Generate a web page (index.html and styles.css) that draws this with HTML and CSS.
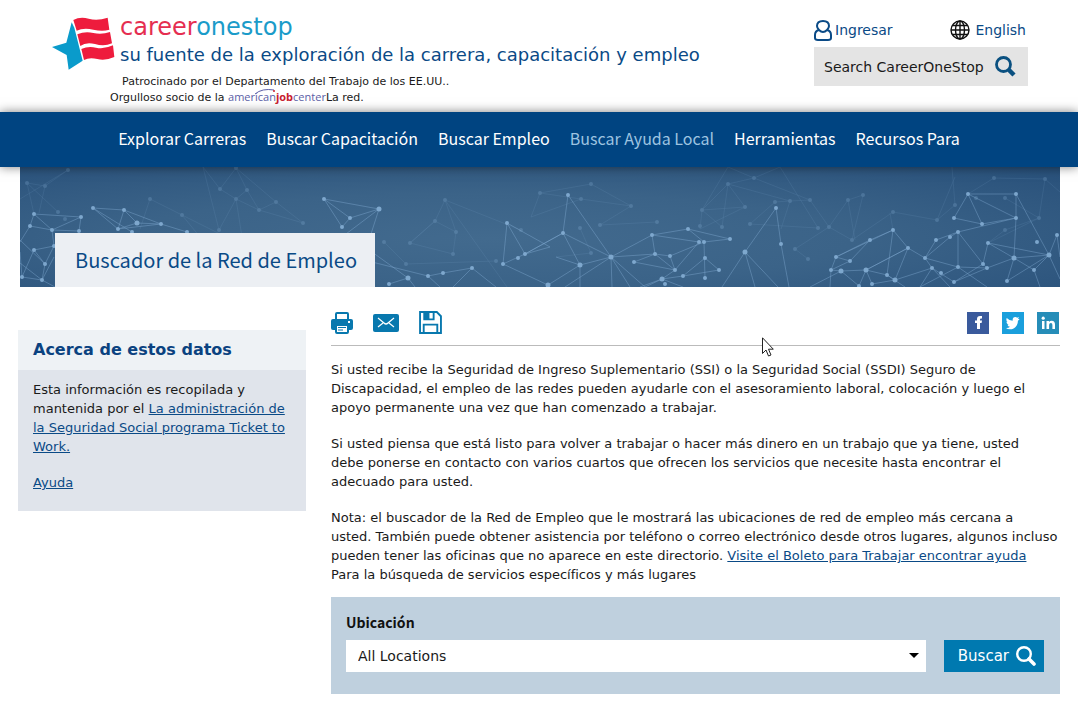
FILE: index.html
```
<!DOCTYPE html>
<html lang="es">
<head>
    <meta charset="UTF-8">
    <meta name="viewport" content="width=device-width, initial-scale=1.0">
    <title>Buscador de la Red de Empleo</title>
    <link rel="stylesheet" href="styles.css">
</head>
<body>
    <header class="header">
        <div class="brand">
            <div class="brand-top">
                <svg class="logo" viewBox="36 52 189 159" aria-hidden="true">
                    <path fill="#0a9bcb" d="M36 142 L79 129 L95 68 L103 84 L128 183 L86 210 L80 166 Z"/>
                    <g fill="#ee1c3d">
                        <path d="M100 61 Q120 50 146 57 T203 54 L208 90 Q188 96 160 90 Q130 84 110 93 Z"/>
                        <path d="M112 104 Q135 94 160 100 T210 97 L216 131 Q192 142 165 133 Q138 126 121 139 Z"/>
                        <path d="M124 148 Q145 138 168 144 T219 137 L223 172 Q196 184 172 178 T132 181 Z"/>
                    </g>
                </svg>
                <div>
                    <a href="#" class="brand-name"><span>career</span>onestop</a>
                    <p class="tagline">su fuente de la exploración de la carrera, capacitación y empleo</p>
                </div>
            </div>
            <p class="sponsor first">Patrocinado por el Departamento del Trabajo de los EE.UU..</p>
            <p class="sponsor">Orgulloso socio de la <span class="ajc">american<b>job</b>center<svg class="arc" viewBox="0 0 22 7" aria-hidden="true"><path d="M1 6 Q8 0 20 2" fill="none" stroke="#5b5ea6"/><circle cx="20" cy="3" r="1" fill="#c8202f"/></svg></span>La red.</p>
        </div>
        <div class="tools">
            <div class="tool-links">
                <a href="#">
                    <svg width="18" height="21" viewBox="0 0 18 21" fill="none" stroke="#0a4a86" stroke-width="2" aria-hidden="true">
                        <path d="M5 10 Q3 8 3 6 Q3 1 9 1 Q15 1 15 6 Q15 8 13 10 Q17 11 17 15 V18 Q17 20 14 20 H4 Q1 20 1 18 V15 Q1 11 5 10 Q9 14 13 10"/>
                    </svg>
                    Ingresar
                </a>
                <a href="#" class="lang">
                    <svg width="20" height="20" viewBox="0 0 20 20" fill="none" stroke="#111" stroke-width="1.4" aria-hidden="true">
                        <circle cx="10" cy="10" r="9"/>
                        <ellipse cx="10" cy="10" rx="4.5" ry="9"/>
                        <path d="M10 1 V19 M1 10 H19 M2.5 5.5 H17.5 M2.5 14.5 H17.5"/>
                    </svg>
                    English
                </a>
            </div>
            <form class="site-search">
                <input type="text" aria-label="Search CareerOneStop" placeholder="Search CareerOneStop">
                <button type="submit" aria-label="Search">
                    <svg width="21" height="21" viewBox="0 0 21 21" fill="none" stroke="#0a5080" aria-hidden="true">
                        <circle cx="8.5" cy="8.5" r="7" stroke-width="2.8"/>
                        <path d="M14 14 L19 19" stroke-width="4.5"/>
                    </svg>
                </button>
            </form>
        </div>
    </header>

    <nav class="nav">
        <a href="#">Explorar Carreras</a>
        <a href="#">Buscar Capacitación</a>
        <a href="#">Buscar Empleo</a>
        <a href="#" class="active">Buscar Ayuda Local</a>
        <a href="#">Herramientas</a>
        <a href="#">Recursos Para</a>
    </nav>

    <div class="banner">
        <svg class="network" viewBox="0 0 1040 120" preserveAspectRatio="xMidYMid slice" aria-hidden="true">
            <!-- far layer -->
            <g class="far">
                <path d="M48 3 L25 19 L7 16 L14 47 M25 19 L19 46 M7 16 L38 45 M48 3 L0 32 M216 1 L200 22 L183 0 L199 63 L216 32 L227 23 L216 1 L256 35 L239 43 L216 32 L200 22 M239 43 L283 56 L256 35 M227 23 L239 43 M130 32 L162 48 L206 70 M130 32 L120 62 M162 48 L180 70 M216 32 L222 70 M425 33 L415 54 L436 65 L425 33 L501 63 M415 54 L390 76 L433 87 L436 65 M425 33 L487 120 M386 97 L364 75 M386 97 L476 94 M390 76 L415 54"/>
                <path d="M520 26 L571 17 L611 39 L561 32 L520 26 L511 50 L561 32 M580 58 L637 55 M580 58 L611 39 M708 17 L734 11 L708 0 L682 43 L708 17 L725 40 L682 43 M708 17 L770 34 L790 33 L734 11 L760 0 L798 61 L730 57 L755 35 L770 34 L761 62 M790 33 L809 60 L828 33 L843 28 L832 73 L809 60 L775 82 M828 33 L835 73 M702 60 L682 43 L680 62 L725 40 M708 17 L702 60 M775 82 L788 92 M917 53 L935 38 L932 0 M917 53 L935 10 M974 11 L1025 12 L1040 25 M974 11 L948 27 M985 31 L1019 51 L1025 12 M1019 51 L968 76 L985 63 M873 45 L832 73 M873 45 L917 53 M560 61 L571 86 L536 90 M985 63 L1019 51 M870 46 L873 63"/>
                <path class="dots" d="M7 16h0 M25 19h0 M48 3h0 M38 45h0 M45 52h0 M130 32h0 M162 48h0 M200 22h0 M227 23h0 M216 1h0 M216 32h0 M239 43h0 M256 35h0 M283 56h0 M199 63h0 M425 33h0 M415 54h0 M436 65h0 M390 76h0 M433 87h0 M386 97h0 M364 75h0 M476 94h0 M501 63h0 M520 26h0 M571 17h0 M561 32h0 M611 39h0 M580 58h0 M637 55h0 M560 61h0 M571 86h0 M682 43h0 M708 17h0 M734 11h0 M725 40h0 M755 35h0 M770 34h0 M790 33h0 M798 61h0 M809 60h0 M828 33h0 M843 28h0 M730 57h0 M702 60h0 M680 59h0 M775 82h0 M788 92h0 M832 73h0 M873 45h0 M917 53h0 M935 38h0 M974 11h0 M1025 12h0 M985 31h0 M1019 51h0 M985 63h0 M956 31h0"/>
            </g>
            <!-- near layer -->
            <g class="near">
                <path d="M14 47 L10 59 L32 63 L61 50 L14 47 L32 63 L59 64 L61 50 M73 41 L104 43 L98 62 L73 41 L112 65 M104 43 L117 56 L98 62 L141 57 L167 65 M117 56 L141 57 M104 43 L141 57 M32 63 L34 79 L14 83 L25 97 L22 113 L2 110 L14 83 M0 73 L25 97 L34 79 M2 110 L0 85 M22 113 L35 120 M10 59 L0 75 M0 96 L22 113 L34 90 M304 32 L359 42 L330 51 L304 32 L322 60 L330 51 M359 42 L322 70 M359 42 L350 70 M352 85 L388 111 L369 117 M352 95 L408 109 L423 106 L452 101 L476 120 M408 109 L420 120 M388 111 L395 120 M452 101 L433 120 M487 56 L505 87 L483 97 L487 56 L530 80 L505 87 L543 66 M483 97 L528 118"/>
                <path d="M548 28 L543 66 L560 98 L591 90 L548 28 M543 66 L591 90 L545 120 M543 66 L505 87 M560 98 L528 118 M536 90 L560 98 L560 120 M591 90 L632 68 L668 62 L710 72 L684 75 L668 62 M632 68 L635 87 L650 89 L684 75 L685 111 M632 68 L679 75 L655 103 L642 112 L663 109 L699 103 L685 91 L663 109 M614 95 L635 87 L591 90 L625 120 L642 112 L663 120 M614 95 L655 103 L650 89 M591 90 L592 120 M591 90 L610 120 M635 87 L655 103 M725 85 L756 41 L761 77 L769 120 M725 85 L702 120 M725 85 L735 120 M725 85 L758 120 M642 112 L620 120"/>
                <path d="M816 90 L850 73 L873 63 L888 81 L905 91 L930 70 L938 65 L963 97 L967 101 L938 100 L905 91 L912 101 L875 113 L888 81 L846 103 L821 104 L811 103 L816 90 L830 94 L850 73 M830 94 L811 103 L810 120 M821 104 L839 119 L846 103 L852 117 L875 113 L867 108 L846 103 L888 81 M867 108 L873 63 L816 90 M905 91 L916 73 L938 65 M912 101 L934 115 L967 101 L994 91 L987 114 M912 101 L900 120 L938 100 L938 65 M948 27 L996 27 L996 51 L948 27 L934 51 L962 57 L948 27 M962 57 L996 51 L938 65 M996 51 L994 91 L968 76 L1029 88 L996 27 M968 76 L963 97 L934 115 M994 91 L1014 103 L1029 88 L1037 68 L1040 90 M1029 88 L987 114 M1014 103 L1020 120 M1029 88 L1040 112 M994 91 L1029 88 M867 108 L885 120 M821 104 L790 120 M938 100 L967 120 M912 101 L930 120"/>
                <path class="dots" d="M14 47h0 M10 59h0 M32 63h0 M61 50h0 M59 64h0 M73 41h0 M104 43h0 M98 62h0 M112 65h0 M141 57h0 M167 65h0 M34 79h0 M14 83h0 M25 97h0 M22 113h0 M2 110h0 M304 32h0 M322 60h0 M330 51h0 M369 117h0 M408 109h0 M423 106h0 M452 101h0 M487 56h0 M505 87h0 M498 91h0 M483 97h0 M548 28h0 M543 66h0 M632 68h0 M668 62h0 M679 75h0 M684 75h0 M710 72h0 M635 87h0 M650 89h0 M614 95h0 M685 91h0 M699 103h0 M685 111h0 M663 109h0 M655 103h0 M645 117h0 M756 41h0 M761 77h0 M816 90h0 M830 94h0 M850 73h0 M873 63h0 M888 81h0 M905 91h0 M811 103h0 M867 108h0 M852 117h0 M839 119h0 M912 101h0 M916 73h0 M930 70h0 M938 65h0 M934 51h0 M948 27h0 M996 27h0 M996 51h0 M962 57h0 M968 76h0 M938 100h0 M963 97h0 M967 101h0 M1037 68h0 M1014 103h0 M987 114h0 M934 115h0 M1017 75h0 M921 106h0"/>
                <path class="dots big" d="M117 56h0 M359 42h0 M388 111h0 M560 98h0 M591 90h0 M528 118h0 M642 112h0 M725 85h0 M821 104h0 M846 103h0 M875 113h0 M994 91h0 M1029 88h0"/>
            </g>
        </svg>
        <h1>Buscador de la Red de Empleo</h1>
    </div>

    <div class="container">
        <aside class="sidebar">
            <h2>Acerca de estos datos</h2>
            <div class="sidebar-body">
                <p>Esta información es recopilada y mantenida por el <a href="#">La administración de la Seguridad Social programa Ticket to Work.</a></p>
                <p><a href="#">Ayuda</a></p>
            </div>
        </aside>

        <main class="main">
            <div class="toolbar">
                <button type="button" aria-label="Imprimir">
                    <svg width="22" height="22" viewBox="0 0 22 22" aria-hidden="true">
                        <path d="M5 8 V2 Q5 1 6 1 H16 Q17 1 17 2 V8" fill="#fff" stroke="#0878ae" stroke-width="2"/>
                        <rect y="7" width="22" height="11" rx="2" fill="#0878ae"/>
                        <rect x="5" y="13" width="12" height="8" rx="1" fill="#fff" stroke="#0878ae" stroke-width="2"/>
                        <path d="M7 15.5 H15 M7 18 H12" stroke="#0878ae" stroke-width="1.2"/>
                        <rect x="17" y="9" width="2" height="2" fill="#fff"/>
                    </svg>
                </button>
                <button type="button" aria-label="Correo electrónico">
                    <svg width="26" height="18" viewBox="0 0 26 18" fill="none" stroke="#fff" aria-hidden="true">
                        <rect width="26" height="18" rx="2" fill="#0878ae" stroke="none"/>
                        <path d="M5 4 L11 9 Q13 11 15 9 L21 4 M5 13 L10 9 M21 13 L16 9" stroke-width="1.2"/>
                    </svg>
                </button>
                <button type="button" aria-label="Guardar">
                    <svg width="23" height="23" viewBox="0 0 22 22" fill="none" stroke="#0878ae" stroke-width="1.8" aria-hidden="true">
                        <path d="M1 1 H17 L21 5 V21 H1 Z"/>
                        <path d="M5 1 V8 H14 V1 M4.5 21 V13 H17.5 V21"/>
                        <rect x="5" y="1" width="5" height="7" fill="#0878ae" stroke="none"/>
                    </svg>
                </button>
                <div class="social">
                    <a href="#" class="facebook" aria-label="Facebook">
                        <svg viewBox="0 0 22 22" fill="#fff" aria-hidden="true"><path d="M10 17 V11 H8 V8.5 H10 V7 Q10 4 13 4 H15 V6.5 H14 Q13 6.5 13 7.5 V8.5 H15 L14.6 11 H13 V17 Z"/></svg>
                    </a>
                    <a href="#" class="twitter" aria-label="Twitter">
                        <svg viewBox="0 0 22 22" fill="#fff" aria-hidden="true"><path d="M17.5 7 Q17 8 15.9 8.8 C16 14 12 17.5 8 17.3 Q5.5 17.2 4 16 Q6.5 16.2 8 14.8 Q6 14.6 5.4 12.8 H6.6 Q4.5 12 4.4 9.8 L5.5 10.1 Q3.6 8.3 4.8 6 Q7.2 8.7 10.7 8.8 Q10.3 5.2 13.3 5 Q14.4 5 15.2 5.7 L17 5.1 Q16.8 6 15.9 6.7 Z"/></svg>
                    </a>
                    <a href="#" class="linkedin" aria-label="LinkedIn">
                        <svg viewBox="0 0 22 22" fill="#fff" aria-hidden="true"><path d="M5 9 H7.5 V17 H5 Z M9.5 9 H12 V10 Q12.8 8.7 14.7 8.7 Q18 8.7 18 12.5 V17 H15.4 V13 Q15.4 11 13.9 11 Q12.100 11 12.100 13 V17 H9.5 Z"/><circle cx="6.2" cy="6.2" r="1.6"/></svg>
                    </a>
                </div>
                <svg class="pointer" viewBox="0 0 12 20" aria-hidden="true"><path d="M.5 .8 V16.5 L4 13 L6.5 19 L9 18 L6.5 12.2 H11.3 Z" fill="#fff" stroke="#222"/></svg>
            </div>

            <p>Si usted recibe la Seguridad de Ingreso Suplementario (SSI) o la Seguridad Social (SSDI) Seguro de Discapacidad, el empleo de las redes pueden ayudarle con el asesoramiento laboral, colocación y luego el apoyo permanente una vez que han comenzado a trabajar.</p>
            <p>Si usted piensa que está listo para volver a trabajar o hacer más dinero en un trabajo que ya tiene, usted<br> debe ponerse en contacto con varios cuartos que ofrecen los servicios que necesite hasta encontrar el<br> adecuado para usted.</p>
            <p>Nota: el buscador de la Red de Empleo que le mostrará las ubicaciones de red de empleo más cercana a<br> usted. También puede obtener asistencia por teléfono o correo electrónico desde otros lugares, algunos incluso pueden tener las oficinas que no aparece en este directorio. <a href="#">Visite el Boleto para Trabajar encontrar ayuda</a><br> Para la búsqueda de servicios específicos y más lugares</p>

            <form class="finder">
                <label for="location">Ubicación</label>
                <div class="finder-row">
                    <div class="select-wrap">
                        <select id="location" name="location">
                            <option>All Locations</option>
                        </select>
                    </div>
                    <button type="submit">
                        Buscar
                        <svg width="20" height="20" viewBox="0 0 20 20" fill="none" stroke="#fff" aria-hidden="true">
                            <circle cx="8" cy="8" r="6.8" stroke-width="2.4"/>
                            <path d="M13 13 L18 18" stroke-width="3.6" stroke-linecap="round"/>
                        </svg>
                    </button>
                </div>
            </form>
        </main>
    </div>
</body>
</html>
```
FILE: styles.css
```
* {
    box-sizing: border-box;
}
body {
    margin: 0;
    font-family: Verdana, "DejaVu Sans", sans-serif;
    font-size: 13px;
    line-height: 19px;
    color: #1a1a1a;
    background: #fff;
}
h1, h2, p {
    margin: 0;
}
a {
    color: #0a4a86;
}
svg {
    display: block;
}
button {
    border: none;
    cursor: pointer;
    font-family: inherit;
}

/* header */
.header {
    display: flex;
    justify-content: space-between;
    padding: 14px 50px 0 52px;
    height: 112px;
}
.brand-top {
    display: flex;
    gap: 5px;
}
.logo {
    width: 63px;
    height: 53px;
    margin-top: 3px;
}
.brand-name {
    display: block;
    font-size: 24px;
    line-height: 26px;
    color: #1a9bc9;
    text-decoration: none;
}
.brand-name span {
    color: #e52e50;
}
.tagline {
    font-size: 18px;
    line-height: 30px;
    color: #0a4a86;
}
.sponsor {
    font-size: 11px;
    line-height: 15px;
    padding-left: 58px;
}
.sponsor.first {
    padding: 4px 0 0 70px;
}
.ajc {
    position: relative;
    font-family: "Open Sans", sans-serif;
    color: #5b5ea6;
}
.ajc b {
    color: #c8202f;
}
.arc {
    position: absolute;
    left: 26px;
    top: -1px;
    width: 22px;
    height: 7px;
}
.tools {
    width: 214px;
    padding-top: 5px;
}
.tool-links {
    display: flex;
    justify-content: space-between;
    height: 28px;
    padding-right: 2px;
}
.tool-links a {
    display: flex;
    align-items: center;
    gap: 3px;
    height: 22px;
    font-size: 14px;
    text-decoration: none;
}
.tool-links .lang {
    gap: 5px;
}
.site-search {
    display: flex;
    align-items: center;
    height: 39px;
    padding: 0 12px 0 10px;
    background: #e4e4e4;
}
.site-search input {
    flex: 1;
    min-width: 0;
    padding: 0;
    border: none;
    background: none;
    font: 14px Verdana, "DejaVu Sans", sans-serif;
}
.site-search input::placeholder {
    color: #1a1a1a;
}
.site-search button {
    padding: 0;
    background: none;
}

/* navigation */
.nav {
    position: relative;
    z-index: 1;
    display: flex;
    justify-content: center;
    align-items: center;
    gap: 20px;
    height: 55px;
    padding-bottom: 2px;
    background: #004481;
    box-shadow: 0 0 10px rgba(0, 0, 0, 0.5);
}
.nav a {
    font-family: "Source Sans Pro", "Noto Sans CJK SC", sans-serif;
    font-size: 16px;
    color: #fff;
    text-decoration: none;
}
.nav a.active {
    color: #9dc3e0;
}

/* banner */
.banner {
    position: relative;
    display: flex;
    align-items: flex-end;
    height: 120px;
    margin: 0 18px 0 20px;
    padding-left: 35px;
    background: radial-gradient(ellipse at 45% 60%, #426a8e 0%, #3b6388 45%, #28507a 100%);
}
.network {
    position: absolute;
    left: 0;
    top: 0;
    width: 100%;
    height: 100%;
    fill: none;
    stroke: #8fb9df;
}
.network .far {
    opacity: 0.25;
}
.network .near {
    opacity: 0.8;
}
.network path {
    stroke-width: 1px;
    stroke-opacity: 0.45;
}
.network .dots {
    stroke-width: 4px;
    stroke-linecap: round;
    stroke-opacity: 1;
}
.network .big {
    stroke-width: 5px;
}
.banner h1 {
    position: relative;
    padding: 13px 18px 13px 20px;
    font-family: "Source Sans Pro", "Noto Sans CJK SC", sans-serif;
    font-size: 20px;
    font-weight: normal;
    line-height: 28px;
    color: #0a4a86;
    background: #eceff3;
}

/* content */
.container {
    display: grid;
    grid-template-columns: 288px 1fr;
    gap: 25px;
    align-items: start;
    padding: 0 18px;
}
.sidebar {
    margin-top: 43px;
    background: #e0e4eb;
}
.sidebar h2 {
    padding: 0 15px;
    font-size: 16px;
    line-height: 40px;
    color: #0a4280;
    background: #eef2f5;
}
.sidebar-body {
    padding: 10px 15px 2px;
}
.sidebar p,
.main p {
    margin-bottom: 17px;
}
.main p:last-of-type {
    margin-bottom: 13px;
}
.toolbar {
    position: relative;
    display: flex;
    align-items: center;
    gap: 20px;
    height: 59px;
    margin-bottom: 14px;
    padding-top: 13px;
    border-bottom: 1px solid #bbb;
}
.toolbar button {
    padding: 0;
    background: none;
}
.social {
    display: flex;
    gap: 13px;
    margin-left: auto;
    padding-right: 1px;
}
.social a {
    width: 22px;
    height: 22px;
}
.facebook {
    background: #3a5a9c;
}
.twitter {
    background: #1a9fdc;
}
.linkedin {
    background: #268db8;
}
.pointer {
    position: absolute;
    left: 431px;
    top: 50px;
    width: 12px;
    height: 20px;
}

/* location finder */
.finder {
    padding: 15px 16px 22px 15px;
    background: #bfd0de;
}
.finder label {
    display: block;
    margin-bottom: 8px;
    font-family: "Source Sans Pro", "Noto Sans CJK SC", sans-serif;
    font-size: 14px;
    font-weight: bold;
    line-height: 20px;
    color: #111;
}
.finder-row {
    display: flex;
    gap: 18px;
}
.select-wrap {
    position: relative;
    flex: 1;
}
.select-wrap::after {
    content: "";
    position: absolute;
    right: 7px;
    top: 13px;
    border: 5px solid transparent;
    border-top-color: #000;
    pointer-events: none;
}
.finder select {
    width: 100%;
    height: 32px;
    padding: 0 12px;
    border: none;
    border-radius: 0;
    appearance: none;
    font: 14px Verdana, "DejaVu Sans", sans-serif;
    color: #1a1a1a;
    background: #fff;
}
.finder button {
    display: flex;
    justify-content: flex-end;
    align-items: center;
    gap: 7px;
    width: 100px;
    height: 32px;
    padding: 0 8px 0 0;
    font-size: 15px;
    color: #fff;
    background: #0079b0;
}
```
